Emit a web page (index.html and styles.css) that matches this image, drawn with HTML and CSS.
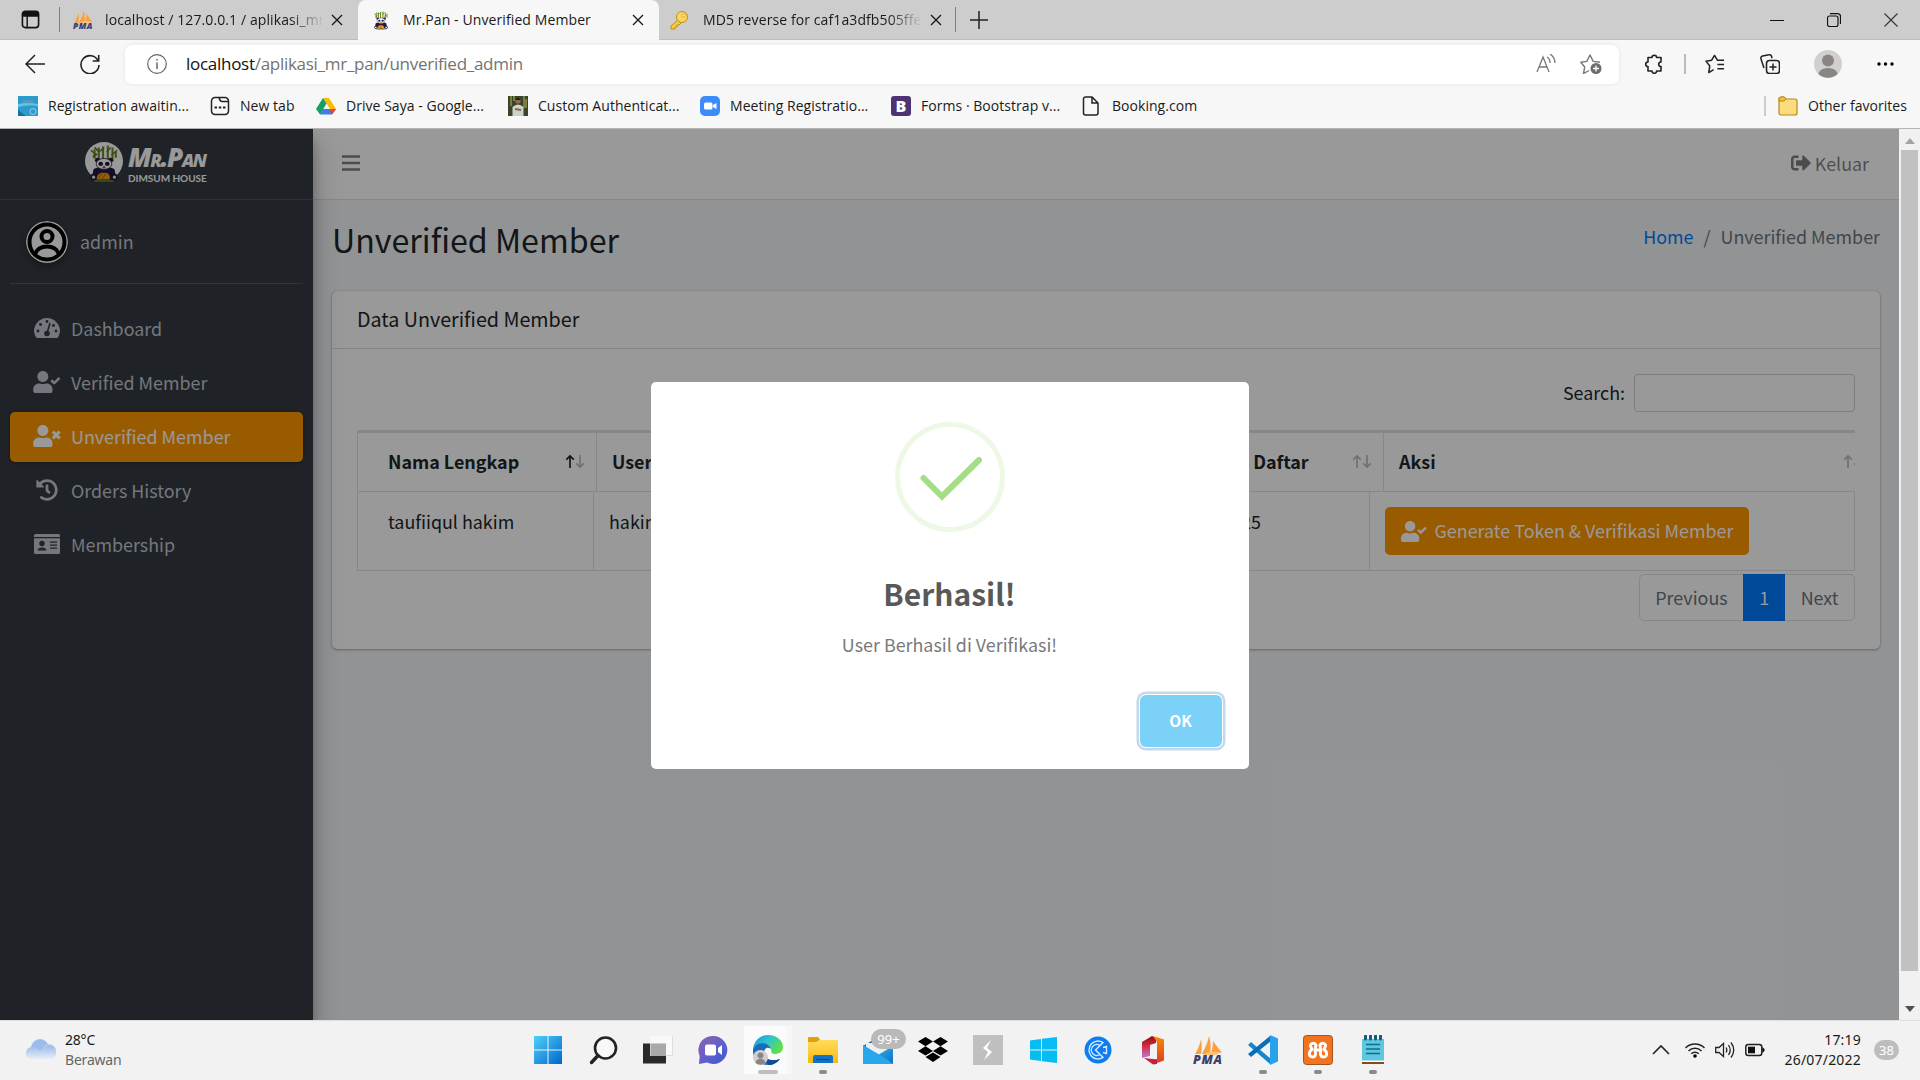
FILE: index.html
```html
<!DOCTYPE html>
<html lang="id">
<head>
<meta charset="utf-8">
<title>Mr.Pan - Unverified Member</title>
<link rel="stylesheet" href="styles.css">
</head>
<body>
<svg class="defs" aria-hidden="true">
  <defs>
    <symbol id="x" viewBox="0 0 12 12"><path d="M1 1l10 10M11 1L1 11" fill="none" stroke="currentColor" stroke-width="1.4"/></symbol>
    <symbol id="pma" viewBox="0 0 30 30">
      <path d="M2 19C4 16 7 10 8 4c1 5 1 10 0 15zM9 19C12 13 15 7 16 1c2 6 2 12 1 18zM18 18c1-3 2-7 2-12 3 4 7 9 9 12-4-1-7-1-11 0z" fill="#f9a13c"/>
      <path d="M10 20c5-4 12-4 17-2l-4 2z" fill="#fbc078"/>
      <text x="0" y="29" class="pma-text" textLength="29">PMA</text>
    </symbol>
    <symbol id="panda" viewBox="0 0 36 42">
      <path d="M8 17V7M12.500 20V5M17 20V4M22 20V3M27 20V5M30.500 16V10" stroke="#6c8e23" stroke-width="2.200"/>
      <path d="M4 8l5 4M8 5l5 5M14 9l4-4M21 10l4-5M26 13l6-5M6 15l5-3" stroke="#557a1c" stroke-width="1.600"/>
      <path d="M7 28q11-6 22 0l2 9q-13 6-26 0z" fill="#221a3d"/>
      <circle cx="11" cy="18.500" r="2.600" fill="#221a3d"/><circle cx="25" cy="18.500" r="2.600" fill="#221a3d"/>
      <ellipse cx="18" cy="22.500" rx="8.300" ry="5.800" fill="#fff" stroke="#221a3d" stroke-width=".8"/>
      <ellipse cx="14.500" cy="22.500" rx="2.500" ry="2.200" fill="#221a3d"/><ellipse cx="21.500" cy="22.500" rx="2.500" ry="2.200" fill="#221a3d"/>
      <circle cx="18" cy="26" r="1.400" fill="#b44"/>
      <path d="M10 39c0-5 4-8 8-7 5-1 7 3 6 7z" fill="#f39a1a"/>
      <path d="M12 37l4-4M16 38l4-5" stroke="#a35a10"/>
      <circle cx="7" cy="36.500" r="2.600" fill="#eee" stroke="#221a3d" stroke-width="1.800"/><circle cx="29" cy="36.500" r="2.600" fill="#eee" stroke="#221a3d" stroke-width="1.800"/>
      <path d="M8 40.500h20" stroke="#6c8e23" stroke-width="1.600"/>
    </symbol>
    <symbol id="user-check" viewBox="0 0 640 512"><path fill="currentColor" d="M224 256c70.700 0 128-57.300 128-128S294.700 0 224 0 96 57.300 96 128s57.300 128 128 128zm89.600 32h-16.700c-22.200 10.200-46.900 16-72.900 16s-50.600-5.800-72.900-16h-16.700C60.200 288 0 348.200 0 422.400V464c0 26.500 21.500 48 48 48h352c26.500 0 48-21.500 48-48v-41.600c0-74.200-60.200-134.400-134.400-134.400z"/><path d="M420 216l68 68L612 158" fill="none" stroke="currentColor" stroke-width="60" stroke-linejoin="round"/></symbol>
    <symbol id="user-times" viewBox="0 0 640 512"><path fill="currentColor" d="M224 256c70.700 0 128-57.300 128-128S294.700 0 224 0 96 57.300 96 128s57.300 128 128 128zm89.600 32h-16.700c-22.200 10.200-46.900 16-72.900 16s-50.600-5.800-72.900-16h-16.700C60.200 288 0 348.200 0 422.400V464c0 26.500 21.500 48 48 48h352c26.500 0 48-21.500 48-48v-41.600c0-74.200-60.200-134.400-134.400-134.400z"/><path d="M456 155l158 158M614 155L456 313" fill="none" stroke="currentColor" stroke-width="72"/></symbol>
    <symbol id="up" viewBox="0 0 10 16"><path d="M5 15V2M1 6l4-4 4 4" fill="none" stroke="currentColor" stroke-width="1.800"/></symbol>
    <symbol id="down" viewBox="0 0 10 16"><path d="M5 1v13M1 10l4 4 4-4" fill="none" stroke="currentColor" stroke-width="1.800"/></symbol>
    <linearGradient id="gw" x2="1" y2="1"><stop offset="0" stop-color="#4fd0fb"/><stop offset="1" stop-color="#0067cc"/></linearGradient>
    <linearGradient id="gchat" x2="1" y2="1"><stop offset="0" stop-color="#8f62ad"/><stop offset=".6" stop-color="#5b5fd0"/><stop offset="1" stop-color="#3a56c4"/></linearGradient>
    <linearGradient id="gedge" x2="1" y2=".5"><stop offset="0" stop-color="#1b8fdc"/><stop offset=".5" stop-color="#2bc3d2"/><stop offset="1" stop-color="#5ee04a"/></linearGradient>
    <linearGradient id="gfold" x2="0" y2="1"><stop offset="0" stop-color="#ffdc5e"/><stop offset="1" stop-color="#f9b90f"/></linearGradient>
    <linearGradient id="gmail" x2="1" y2="1"><stop offset="0" stop-color="#3cc6f4"/><stop offset="1" stop-color="#0f6fc6"/></linearGradient>
    <linearGradient id="gcloud" x2="0" y2="1"><stop offset="0" stop-color="#9cbcec"/><stop offset="1" stop-color="#e6eef6"/></linearGradient>
    <linearGradient id="goff" x2="0" y2="1"><stop offset="0" stop-color="#8e1010"/><stop offset=".5" stop-color="#d9304a"/><stop offset="1" stop-color="#b57be0"/></linearGradient>
    <linearGradient id="goff2" x2="0" y2="1"><stop offset="0" stop-color="#ff8a00"/><stop offset="1" stop-color="#d83b2a"/></linearGradient>
  </defs>
</svg>

<div class="tabstrip">
  <svg class="workspace" viewBox="0 0 20 20"><rect x="1.500" y="1.500" width="17" height="17" rx="3" fill="none" stroke="#111" stroke-width="1.700"/><path d="M1 7V4a3 3 0 0 1 3-3h12a3 3 0 0 1 3 3v3z" fill="#111"/><path d="M6.500 6v12" stroke="#111" stroke-width="1.500"/></svg>
  <span class="tab-sep"></span>
  <div class="tab">
    <svg class="favicon"><use href="#pma"/></svg>
    <span class="tab-title fade">localhost / 127.0.0.1 / aplikasi_mr_pan</span>
    <svg class="tab-close"><use href="#x"/></svg>
  </div>
  <div class="tab active">
    <svg class="favicon"><use href="#panda"/></svg>
    <span class="tab-title">Mr.Pan - Unverified Member</span>
    <svg class="tab-close"><use href="#x"/></svg>
  </div>
  <div class="tab third">
    <svg class="favicon" viewBox="0 0 20 20"><path d="M10 9l-8 7v3h4v-2h2v-2h2l3-3" fill="#f6c945" stroke="#c58d17"/><circle cx="13" cy="7" r="5.500" fill="#fbd75b" stroke="#c58d17"/><circle cx="14.500" cy="5.500" r="1.500" fill="#fff" stroke="#c58d17" stroke-width=".8"/></svg>
    <span class="tab-title fade">MD5 reverse for caf1a3dfb505ffed</span>
    <svg class="tab-close"><use href="#x"/></svg>
  </div>
  <span class="tab-sep"></span>
  <svg class="newtab" viewBox="0 0 18 18"><path d="M9 0v18M0 9h18" stroke="#222" stroke-width="1.500"/></svg>
  <div class="winctl">
    <svg viewBox="0 0 14 14"><path d="M0 7.500h14" stroke="#111"/></svg>
    <svg viewBox="0 0 14 14"><rect x=".5" y="3" width="10.500" height="10.500" rx="2" fill="none" stroke="#111" stroke-width="1.200"/><path d="M3 .6h7.500a3 3 0 0 1 3 3V11" fill="none" stroke="#111" stroke-width="1.200"/></svg>
    <svg viewBox="0 0 14 14"><path d="M.5.5l13 13M13.500.5l-13 13" stroke="#333" stroke-width="1.100"/></svg>
  </div>
</div>

<div class="toolbar">
  <svg class="ic back" viewBox="0 0 20 20"><path d="M20 10H1M10 1l-9 9 9 9" fill="none" stroke="#222" stroke-width="1.500"/></svg>
  <svg class="ic reload" viewBox="0 0 20 20"><path d="M18 6.500A9 9 0 1 0 19 11M18.700 1v6h-6" fill="none" stroke="#222" stroke-width="1.600"/></svg>
  <div class="address">
    <svg class="ic info" viewBox="0 0 20 20"><circle cx="10" cy="10" r="9.300" fill="none" stroke="#666" stroke-width="1.200"/><path d="M10 8.500V15M10 5v1.600" stroke="#666" stroke-width="1.500"/></svg>
    <span class="url"><b>localhost</b>/aplikasi_mr_pan/unverified_admin</span>
    <svg class="ic aloud" viewBox="0 0 20 20"><path d="M1 18L7 3l6 15M3 13h8M11 3c2 1 3 3 3 6M14 0c3 2 5 5 5 9" fill="none" stroke="#777" stroke-width="1.300"/></svg>
    <svg class="ic star" viewBox="0 0 22 20"><path d="M9 16.500l-5.500 3 1.200-6.500L.8 8.300l6-.9L10 1l3.200 6.400 6.800.9" fill="none" stroke="#777" stroke-width="1.400" stroke-linejoin="round"/><circle cx="16" cy="14.500" r="5.500" fill="#6d6d6d"/><path d="M16 11.500v6M13 14.500h6" stroke="#fff" stroke-width="1.300"/></svg>
  </div>
  <svg class="ic puzzle" viewBox="0 0 20 20"><path d="M4 3.500h4a2.300 2.300 0 0 1 4.600 0H17V8a2.300 2.300 0 0 0 0 4.600V17h-4.400a2.300 2.300 0 0 1-4.600 0H4v-4.400A2.300 2.300 0 0 1 4 8z" fill="none" stroke="#222" stroke-width="1.600" stroke-linejoin="round"/></svg>
  <span class="tool-sep"></span>
  <svg class="ic favs" viewBox="0 0 21 20"><path d="M9 16l-5 3 1-7-4-5 6-1 3-5 3 5h7M13 10.500h7M13 15h7" fill="none" stroke="#222" stroke-width="1.600" stroke-linejoin="round"/></svg>
  <svg class="ic coll" viewBox="0 0 20 20"><path d="M4 14L1 5a2.500 2.500 0 0 1 1.500-3L9 .8a2 2 0 0 1 2.500 1.500l.5 2" fill="none" stroke="#222" stroke-width="1.500"/><rect x="6.500" y="6.500" width="13" height="13" rx="3" fill="none" stroke="#222" stroke-width="1.600"/><path d="M13 9.500v7M9.500 13h7" stroke="#222" stroke-width="1.500"/></svg>
  <svg class="avatar" viewBox="0 0 28 28"><circle cx="14" cy="14" r="14" fill="#d2d0ce"/><circle cx="14" cy="10.500" r="6" fill="#8a8583"/><path d="M4.500 24c1-8 18-8 19 0a14 14 0 0 1-19 0z" fill="#8a8583"/></svg>
  <svg class="dots" viewBox="0 0 17 4"><circle cx="2" cy="2" r="1.700"/><circle cx="8.500" cy="2" r="1.700"/><circle cx="15" cy="2" r="1.700"/></svg>
</div>

<div class="bookmarks">
  <span class="bm"><svg viewBox="0 0 20 20"><rect width="20" height="20" fill="#2d9bcb"/><path d="M5 5.500h10" stroke="#a98a6a" stroke-width="1.500" fill="none"/><path d="M0 8q10-2 20 0v2q-10-2-20 1z" fill="#65c3e4"/><circle cx="15" cy="15.500" r="3" fill="none" stroke="#8fd2ea"/><path d="M0 14l8 6H0z" fill="#1670a0"/></svg>Registration awaitin...</span>
  <span class="bm"><svg viewBox="0 0 20 20"><path d="M1.500 5A3.500 3.500 0 0 1 5 1.500h10A3.500 3.500 0 0 1 18.500 5v10a3.500 3.500 0 0 1-3.500 3.500H5A3.500 3.500 0 0 1 1.500 15zM9 1.500q1 4 3 4h6.500" fill="none" stroke="#222" stroke-width="1.500"/><path d="M4.500 11.500h2.500M8.800 11.500h2.500M13 11.500h2.500" stroke="#222" stroke-width="2.200"/></svg>New tab</span>
  <span class="bm"><svg viewBox="0 0 20 20"><path d="M7 2h6l7 11h-6z" fill="#fbbc05"/><path d="M7 2l3.500 5.500L4 18.500 0 13z" fill="#15a15b"/><path d="M6.500 13H20l-4 5.500H4z" fill="#3f7ee8"/><path d="M16 18.500L13.500 13H20z" fill="#ea4335"/></svg>Drive Saya - Google...</span>
  <span class="bm"><svg viewBox="0 0 20 20"><rect width="20" height="20" fill="#38452a"/><path d="M3 0v10M16 0v12M6 0v5M18 3v9" stroke="#7d7c3c" stroke-width="2"/><circle cx="10" cy="5" r="2.600" fill="#9a6b4b"/><path d="M7.500 4q2.500-4 5 0z" fill="#1a1613"/><path d="M4.500 20V11q5.500-5 11 0v9z" fill="#cdd2cb"/><path d="M7 13l6 1" stroke="#8a6650" stroke-width="2"/></svg>Custom Authenticat...</span>
  <span class="bm"><svg viewBox="0 0 20 20"><rect width="20" height="20" rx="5" fill="#3b8bfb"/><rect x="4" y="6.500" width="8.500" height="7" rx="1.500" fill="#fff"/><path d="M13 9l3.500-2v6L13 11z" fill="#fff"/></svg>Meeting Registratio...</span>
  <span class="bm"><svg viewBox="0 0 20 20"><rect width="20" height="20" rx="3" fill="#4d3274"/><text x="4.500" y="16" class="bs">B</text></svg>Forms · Bootstrap v...</span>
  <span class="bm"><svg viewBox="0 0 20 20"><path d="M1.500 3a2 2 0 0 1 2-2H10l6 6v10a2 2 0 0 1-2 2H3.500a2 2 0 0 1-2-2zM10 1v6h6" fill="none" stroke="#222" stroke-width="1.500"/></svg>Booking.com</span>
  <span class="bm other"><svg viewBox="0 0 20 20"><path d="M1 3a2 2 0 0 1 2-2h3l2 2h9a2 2 0 0 1 2 2v12a2 2 0 0 1-2 2H3a2 2 0 0 1-2-2z" fill="#fddc7e" stroke="#b58a1d" stroke-width="1.200"/><path d="M1 5V3a2 2 0 0 1 2-2h3l2 2-2 2z" fill="#f5c433" stroke="#b58a1d"/></svg>Other favorites</span>
</div>

<div class="viewport">
  <div class="page">
    <aside class="sidebar">
      <div class="brand">
        <span class="logo"><svg><use href="#panda"/></svg></span>
        <span class="brand-text"><span class="name">Mr.Pan</span><span class="tag">DIMSUM HOUSE</span></span>
      </div>
      <div class="user">
        <svg viewBox="0 0 42 42"><circle cx="21" cy="21" r="21" fill="#fff"/><g fill="none" stroke="#000" stroke-width="4"><circle cx="21" cy="21" r="17.500"/><circle cx="21" cy="15.500" r="5.500"/><path d="M9 33q3-7.500 12-7.500T33 33"/></g></svg>
        <span>admin</span>
      </div>
      <nav>
        <a><svg class="w26" viewBox="0 0 26 20"><path fill="currentColor" d="M2.500 20A13 13 0 0 1 0 13C0 6 6 0 13 0s13 6 13 13a13 13 0 0 1-2.500 7z"/><g fill="#343a40"><circle cx="13" cy="3.500" r="1.400"/><circle cx="6.500" cy="6.500" r="1.400"/><circle cx="4" cy="13" r="1.400"/><circle cx="19.500" cy="7.500" r="1.400"/><circle cx="22" cy="13" r="1.400"/><circle cx="13" cy="15.500" r="2.800"/></g><path d="M13 15.500L16 5" stroke="#343a40" stroke-width="1.600"/></svg><span>Dashboard</span></a>
        <a><svg class="w28"><use href="#user-check"/></svg><span>Verified Member</span></a>
        <a class="current"><svg class="w28"><use href="#user-times"/></svg><span>Unverified Member</span></a>
        <a><svg class="w22" viewBox="0 0 512 512"><path fill="currentColor" d="M504 255.531c.253 136.640-111.180 248.372-247.820 248.468-59.015.042-113.223-20.530-155.822-54.911-11.077-8.940-11.905-25.541-1.839-35.607l11.267-11.267c8.609-8.609 22.353-9.551 31.891-1.984C173.062 425.135 212.781 440 256 440c101.705 0 184-82.311 184-184 0-101.705-82.311-184-184-184-48.814 0-93.149 18.969-126.068 49.932l50.754 50.754c10.080 10.080 2.941 27.314-11.313 27.314H24c-8.837 0-16-7.163-16-16V38.627c0-14.254 17.234-21.393 27.314-11.314l49.372 49.372C129.209 34.136 189.552 8 256 8c136.810 0 247.747 110.780 248 247.531zm-180.912 78.784l9.823-12.630c8.138-10.463 6.253-25.542-4.210-33.679L288 256.349V152c0-13.255-10.745-24-24-24h-16c-13.255 0-24 10.745-24 24v135.651l65.409 50.874c10.463 8.137 25.541 6.253 33.679-4.210z"/></svg><span>Orders History</span></a>
        <a><svg class="w26" viewBox="0 0 26 20"><path fill="currentColor" d="M0 3V1.500A1.500 1.500 0 0 1 1.500 0h23A1.500 1.500 0 0 1 26 1.500V3zM0 4.200h26v14.300a1.500 1.500 0 0 1-1.500 1.500h-23A1.500 1.500 0 0 1 0 18.500z"/><g fill="#343a40"><circle cx="8" cy="9.500" r="2.700"/><path d="M3.500 16.500c0-4 9-4 9 0z"/><path d="M16 7.500h7v1.200h-7zM16 10.500h7v1.200h-7zM16 13.500h7v1.200h-7z"/></g></svg><span>Membership</span></a>
      </nav>
    </aside>

    <main>
      <header class="navbar">
        <svg class="bars" viewBox="0 0 18 16"><path d="M0 1.500h18M0 8h18M0 14.500h18" stroke="currentColor" stroke-width="2.300"/></svg>
        <a class="logout"><svg viewBox="0 0 512 512"><path fill="currentColor" d="M497 273L329 441c-15 15-41 4.500-41-17v-96H152c-13.300 0-24-10.700-24-24v-96c0-13.300 10.700-24 24-24h136V88c0-21.400 25.900-32 41-17l168 168c9.300 9.400 9.300 24.600 0 34zM192 436v-40c0-6.600-5.400-12-12-12H96c-17.700 0-32-14.300-32-32V160c0-17.700 14.300-32 32-32h84c6.600 0 12-5.400 12-12V76c0-6.600-5.400-12-12-12H96c-53 0-96 43-96 96v192c0 53 43 96 96 96h84c6.600 0 12-5.400 12-12z"/></svg>Keluar</a>
      </header>
      <div class="content-header">
        <h1>Unverified Member</h1>
        <div class="crumbs"><a>Home</a><i>/</i><span>Unverified Member</span></div>
      </div>
      <section class="card">
        <div class="card-header">Data Unverified Member</div>
        <div class="card-body">
          <label class="search"><span>Search:</span><input type="text"></label>
          <div class="table">
            <div class="thead">
              <div class="first">Nama Lengkap<span class="sort asc"><svg><use href="#up"/></svg><svg><use href="#down"/></svg></span></div>
              <div>Username</div>
              <div>No. HP</div>
              <div>Tanggal Daftar<span class="sort"><svg><use href="#up"/></svg><svg><use href="#down"/></svg></span></div>
              <div class="aksi">Aksi<span class="sort"><svg><use href="#up"/></svg><svg><use href="#down"/></svg></span></div>
            </div>
            <div class="trow">
              <div class="first">taufiiqul hakim</div>
              <div>hakim</div>
              <div></div>
              <div>2022-07-25</div>
              <div class="action"><button class="verify"><svg><use href="#user-check"/></svg><span>Generate Token &amp; Verifikasi Member</span></button></div>
            </div>
          </div>
          <div class="pager"><span>Previous</span><span class="on">1</span><span>Next</span></div>
        </div>
      </section>
    </main>

    <div class="overlay">
      <div class="modal">
        <svg class="success" viewBox="0 0 110 110"><circle cx="55" cy="55" r="52.500" fill="none" stroke="#edf8e7" stroke-width="5"/><path d="M28.500 56l18.500 18.500L84 38" fill="none" stroke="#a5dc86" stroke-width="6" stroke-linecap="round"/></svg>
        <h2>Berhasil!</h2>
        <p>User Berhasil di Verifikasi!</p>
        <button class="ok">OK</button>
      </div>
    </div>
  </div>
  <div class="scrollbar">
    <svg viewBox="0 0 10 6"><path d="M0 6l5-6 5 6z" fill="#a3a3a3"/></svg>
    <div class="thumb"></div>
    <svg viewBox="0 0 10 6"><path d="M0 0l5 6 5-6z" fill="#505050"/></svg>
  </div>
</div>

<footer class="taskbar">
  <div class="weather">
    <svg viewBox="0 0 30 20"><circle cx="14" cy="9" r="9" fill="#9dbcec"/><circle cx="6" cy="14" r="6" fill="#c5d6ef"/><circle cx="23" cy="12" r="7" fill="#b4cae4"/><path d="M6 20a6 6 0 0 1 0-12q5 0 8 4 4-5 10-5a6 6 0 0 1 0 13z" fill="url(#gcloud)"/></svg>
    <div><span>28°C</span><span class="muted">Berawan</span></div>
  </div>
  <div class="apps">
    <span><svg viewBox="0 0 30 30"><path d="M1 1h13.500v13.500H1zM15.500 1H29v13.500H15.500zM1 15.500h13.500V29H1zM15.500 15.500H29V29H15.500z" fill="url(#gw)"/></svg></span>
    <span><svg viewBox="0 0 30 30"><circle cx="17.500" cy="13" r="10.500" fill="#f8f8f8" stroke="#222" stroke-width="2.600"/><path d="M10 20.500L3.500 27.500" stroke="#222" stroke-width="3.400" stroke-linecap="round"/></svg></span>
    <span><svg viewBox="0 0 30 30"><rect x="0" y="8.500" width="23" height="20" fill="#2b2a29"/><rect x="7" y="1" width="23" height="20" fill="#e9e9e9"/><path d="M7 1h23v20h-7V8.500H7z" fill="#f9f9f9"/><path d="M29.500 1v19.500H23" fill="none" stroke="#ddd"/><rect x="7.500" y="8.500" width="15.500" height="12.500" fill="#a9a9a9"/></svg></span>
    <span><svg viewBox="0 0 30 30"><path d="M15 1a14 14 0 1 1-6 26.500L1 29l.7-8A14 14 0 0 1 15 1z" fill="url(#gchat)"/><rect x="7" y="9.500" width="11" height="11" rx="2" fill="#fff"/><path d="M20 13l4-3v10l-4-3z" fill="#fff"/></svg></span>
    <span class="edge"><svg viewBox="0 0 30 30"><path d="M0 14C1 5 8 0 15 0c9 0 15 6 15 12 0 5-4 7-8 7-5 0-3-3-4-5-3-6-13-7-18 0z" fill="url(#gedge)"/><path d="M0 14C5 6 15 7 18 14c-4-3-7 0-7 4 0 6 7 9 16 6-4 5-9 6-12 6C6 30-1 23 0 14z" fill="#176dba"/><path d="M11 18c0 6 7 9 16 6-3 4-7 6-11 6-4-3-5-7-5-12z" fill="#114b91"/><circle cx="7.500" cy="22.500" r="7.500" fill="#d2d0ce"/><circle cx="7.500" cy="20.500" r="3" fill="#8a8583"/><path d="M2.500 27.500c1-5 9-5 10 0-2 3-8 3-10 0z" fill="#8a8583"/></svg><i class="run wide"></i></span>
    <span><svg viewBox="0 0 30 30"><path d="M0 3a1 1 0 0 1 1-1h9l3 4h-3l-2 3H0z" fill="#e0a00c"/><path d="M0 7h8.500l3-2H30v23H0z" fill="url(#gfold)"/><path d="M5 28v-6a2 2 0 0 1 2-2h16a2 2 0 0 1 2 2v6z" fill="#1273c9"/><path d="M8.500 24.500h13" stroke="#0a4d92" stroke-width="1.200"/></svg><i class="run"></i></span>
    <span><svg viewBox="0 0 30 30"><path d="M0 11L15 2l15 9v4H0z" fill="#0f62ae"/><path d="M3 8h24v8l-12 6-12-8z" fill="#eee"/><path d="M0 10l15 10 15-9v18H0z" fill="url(#gmail)"/><path d="M0 29V10l22 13 8 6z" fill="#28a8ea"/></svg><b class="count">99+</b></span>
    <span><svg viewBox="0 0 30 30"><path d="M7.500 2l7.500 4.500-7.500 4.700L0 6.500zM22.500 2L30 6.500l-7.500 4.700L15 6.500zM7.500 11.300l7.500 4.700-7.500 4.500L0 16zM22.500 11.300L30 16l-7.500 4.500L15 16zM7.500 22l7.500-4.600 7.500 4.600-7.500 5z"/></svg></span>
    <span><svg viewBox="0 0 30 30"><rect width="30" height="30" fill="#bfbfbf"/><path d="M18 5l-8 8 5 4-4 8 8-8-5-4z" fill="#fff"/></svg></span>
    <span><svg viewBox="0 0 30 30"><path d="M2 5.500L13 4v10.500H2zM14 3.800L29 2v12.500H14zM2 15.500h11V26L2 24.500zM14 15.500h15V28L14 26.300z" fill="#05bdf3"/></svg></span>
    <span><svg viewBox="0 0 30 30"><circle cx="15" cy="15" r="13.500" fill="#0f7df0"/><g fill="none" stroke="#d5ebff" stroke-width="1.400"><path d="M20 7.500a9 9 0 1 0 0 15L12.500 15z"/><path d="M20 12.500l3.500-1v7l-3.500-1M17 10.500a5.500 5.500 0 1 0 0 9"/></g></svg></span>
    <span><svg viewBox="0 0 30 30"><path d="M4 7L14 1l4 2v5l-6 2v11l-8 2z" fill="url(#goff)"/><path d="M15 1l11 3.500v21L16 29l-1-4 4-1V7z" fill="url(#goff2)"/><path d="M6 23l13 1.500V29l-4 .5z" fill="#c2233a"/></svg></span>
    <span><svg><use href="#pma"/></svg></span>
    <span><svg viewBox="0 0 30 30"><path d="M3 7l20 17-1 5L0 10z" fill="#1587cf"/><path d="M3 22L23 6l-1-5L0 19z" fill="#0b6fb3"/><path d="M22 0l8 3.500v23L22 30z" fill="#29a2ec"/></svg><i class="run"></i></span>
    <span><svg viewBox="0 0 30 30"><rect x=".5" y=".5" width="29" height="29" rx="3" fill="#f0731f" stroke="#a3541c"/><path d="M7.500 10a3 3 0 0 1 5.500 0c0 2.500-1 3-1 5h6c0-2-1-2.500-1-5a3 3 0 0 1 5.500 0c.5 2-2 3-1 5 3 2 3 7-1 7-3.500 0-3.500-4-2.500-7h-6c1 3 1 7-2.500 7-4 0-4-5-1-7 1-2-1.500-3-1-5z" fill="none" stroke="#fff" stroke-width="3" stroke-linejoin="round"/></svg><i class="run"></i></span>
    <span><svg viewBox="0 0 30 30"><path d="M4 4h22v22H4z" fill="#5ec6df"/><path d="M4 26h22v3H4z" fill="#8a4a0f"/><path d="M4 25.500h22v1.500H4z" fill="#fff"/><path d="M8 9.500h14M8 14h14M8 18.500h14" stroke="#0f6e8f" stroke-width="1.700"/><path d="M7.500 1v3M12.500 1v3M17.500 1v3M22.500 1v3" stroke="#0f5c7c" stroke-width="3" stroke-linecap="round"/></svg><i class="run"></i></span>
  </div>
  <div class="tray">
    <svg viewBox="0 0 20 20"><path d="M2 14l8-8 8 8" fill="none" stroke="#222" stroke-width="1.600"/></svg>
    <svg viewBox="0 0 20 20"><g fill="none" stroke="#222" stroke-width="1.500"><path d="M.5 8a13.500 13.500 0 0 1 19 0M3.500 11a9.200 9.200 0 0 1 13 0M6.300 13.800a5.200 5.200 0 0 1 7.400 0"/></g><circle cx="10" cy="16" r="1.800"/></svg>
    <svg viewBox="0 0 20 20"><path d="M.7 7.500v5H4l4.500 4V3.500L4 7.500zM11 7.500q1.700 2.500 0 5M13.500 5q3.500 5 0 10M16 2.500q5.500 7.500 0 15" fill="none" stroke="#222" stroke-width="1.300"/></svg>
    <svg viewBox="0 0 20 20"><rect x=".8" y="4.500" width="16" height="11" rx="2.500" fill="none" stroke="#222" stroke-width="1.500"/><rect x="3" y="6.700" width="7" height="6.600" fill="#111"/><path d="M18 8.500q2 1.500 0 3z" stroke="#111" stroke-width="1.400"/></svg>
    <div class="clock"><span>17:19</span><span>26/07/2022</span></div>
    <b class="notif">38</b>
  </div>
</footer>
</body>
</html>
```
FILE: styles.css
```css
* { box-sizing: border-box; }
body {
  margin: 0;
  width: 1920px;
  height: 1080px;
  overflow: hidden;
  display: flex;
  flex-direction: column;
  font-family: "Open Sans", "Noto Sans", sans-serif;
  font-size: 14px;
  color: #1a1a1a;
}
svg { display: block; flex: none; }
.defs { position: absolute; width: 0; height: 0; }
.pma-text { font: italic 800 12.500px "Open Sans", sans-serif; fill: #3f3d6b; }
.bs { font: 800 16px "Open Sans", sans-serif; fill: #fff; }

/* browser chrome */
.tabstrip { height: 40px; flex: none; background: #cdcdcd; border-bottom: 1px solid #bdbdbd; display: flex; align-items: center; }
.workspace { width: 19px; height: 19px; margin: 0 19px 0 21px; }
.tab-sep { width: 1px; height: 25px; background: #7d7d7d; }
.tab { width: 298px; height: 40px; display: flex; align-items: center; padding: 0 15px 0 13px; }
.tab.active { width: 301px; background: #f7f7f7; border-radius: 8px 8px 0 0; }
.tab.third { width: 296px; padding: 0 13px 0 10px; }
.favicon { width: 20px; height: 20px; margin-right: 12px; }
.tab.third .favicon { margin-right: 14px; }
.tab-title { flex: 1; letter-spacing: .1px; white-space: nowrap; overflow: hidden; }
.fade { -webkit-mask-image: linear-gradient(90deg, #000 185px, transparent 219px); mask-image: linear-gradient(90deg, #000 185px, transparent 219px); }
.tab-close { width: 12px; height: 12px; margin-left: 8px; }
.newtab { width: 18px; height: 18px; margin-left: 14px; }
.winctl { margin-left: auto; display: flex; gap: 43px; margin-right: 22px; }
.winctl svg { width: 14px; height: 14px; }

.toolbar { height: 48px; flex: none; background: #f7f7f7; display: flex; align-items: center; }
.ic { width: 20px; height: 20px; }
.back { margin: 0 35px 0 25px; }
.reload { margin-right: 25px; }
.address { width: 1494px; height: 39px; border-radius: 7px; background: #fff; box-shadow: 0 0 4px rgba(0,0,0,.08); display: flex; align-items: center; padding: 0 17px 0 22px; }
.url { margin-left: 19px; font-size: 17px; letter-spacing: -.28px; color: #737373; flex: 1; padding-bottom: 2px; }
.url b { color: #111; font-weight: 400; }
.aloud { margin-right: 24px; }
.star { width: 22px; }
.puzzle { margin-left: 25px; }
.tool-sep { width: 2px; height: 20px; background: #bbb; margin: 0 19px 0 20px; }
.coll { margin-left: 35px; }
.avatar { width: 28px; height: 28px; margin: 0 35px 0 34px; }
.dots { width: 17px; height: 4px; }

.bookmarks { height: 41px; flex: none; background: #f7f7f7; border-bottom: 1px solid #b5b5b5; padding: 0 13px 5px 18px; display: grid; grid-template-columns: 192px 106px 192px 192px 191px 191px 200px 1fr; align-items: center; }
.bm { display: flex; align-items: center; gap: 10px; letter-spacing: .04px; line-height: 20px; white-space: nowrap; }
.bm svg { width: 20px; height: 20px; }
.other { justify-self: end; border-left: 2px solid #ccc; padding-left: 12px; }

/* web page */
.viewport { height: 891px; flex: none; display: flex; }
.page {
  position: relative;
  flex: 1;
  overflow: hidden;
  display: flex;
  background: #f4f6f9;
  font-family: "Noto Sans CJK JP", sans-serif;
  font-size: 17.900px;
  color: #212529;
}
.sidebar { position: relative; z-index: 1; width: 313px; flex: none; background: #343a40; color: #c2c7d0; box-shadow: 0 14px 28px rgba(0,0,0,.25), 0 10px 10px rgba(0,0,0,.22); }
.brand { height: 71px; border-bottom: 1px solid #4b545c; display: flex; padding: 13px 0 0 85px; gap: 5px; }
.logo { width: 38px; height: 38px; border-radius: 50%; background: #fff; }
.logo svg { width: 34px; height: 41px; margin-left: 2px; }
.brand-text { display: flex; flex-direction: column; color: #fff; }
.name { font: italic 800 26px/30px "Open Sans", sans-serif; font-variant: small-caps; letter-spacing: -1.400px; }
.tag { font: 700 10px/10px Lato, sans-serif; letter-spacing: -.050px; margin-top: 1px; }
.user { height: 84px; margin: 0 10px; border-bottom: 1px solid #4f5962; display: flex; align-items: center; gap: 12px; padding-left: 16px; }
.user span { padding-bottom: 2px; }
.user svg { width: 42px; height: 42px; border-radius: 50%; box-shadow: 0 3px 6px rgba(0,0,0,.3); }
nav { padding: 20px 10px; display: grid; gap: 4px; }
nav a { height: 50px; display: grid; grid-template-columns: 33px 1fr; justify-items: center; align-items: center; padding: 0 0 2px 20px; border-radius: 5px; column-gap: 8px; }
nav a span { justify-self: start; }
nav .current { background: #ff9800; color: #fff; box-shadow: 0 1px 3px rgba(0,0,0,.3); }
.w26 { width: 26px; height: 20px; }
.w28 { width: 28px; height: 22px; }
.w22 { width: 22px; height: 22px; }

main { flex: 1; }
.navbar { height: 71px; background: #fff; border-bottom: 1px solid #dee2e6; color: rgba(0,0,0,.5); display: flex; align-items: center; justify-content: space-between; padding: 0 30px 2px 29px; }
.bars { width: 18px; height: 16px; }
.logout { display: flex; align-items: center; gap: 4px; }
.logout svg { width: 20px; height: 20px; }
.content-header { height: 91px; padding: 19px 19px 0 19px; display: flex; justify-content: space-between; }
h1 { font-size: 32.200px; line-height: 40px; font-weight: 400; margin: 0; }
.crumbs { display: flex; gap: 10px; line-height: 35px; color: #6c757d; }
.crumbs a { color: #007bff; }
.crumbs i { font-style: normal; }
.card { margin: 0 19px; height: 358px; background: #fff; border-radius: 5px; box-shadow: 0 0 1px rgba(0,0,0,.25), 0 1px 3px rgba(0,0,0,.3); }
.card-header { height: 58px; border-bottom: 1px solid #dfdfdf; padding: 0 25px; font-size: 19.700px; line-height: 55px; }
.card-body { padding: 25px; display: flex; flex-direction: column; }
.search { display: flex; align-self: flex-end; align-items: center; gap: 9px; height: 38px; }
.search span { padding-bottom: 3px; }
.search input { width: 221px; height: 38px; border: 1px solid #ced4da; border-radius: 4px; background: #fff; }
.table { margin-top: 18px; border-left: 1px solid #dee2e6; }
.thead { display: grid; grid-template-columns: 239px 203px 365px 219px 1fr; height: 62px; border-top: 3px solid #dee2e6; border-bottom: 1px solid #dee2e6; font-weight: 700; overflow: hidden; }
.thead > div { display: flex; align-items: center; justify-content: space-between; padding: 0 11px 2px 15px; border-right: 1px solid #dee2e6; white-space: nowrap; }
.thead .first, .trow .first { padding-left: 30px; }
.thead .aksi { border: 0; padding-right: 0; margin-right: -8px; }
.sort { display: flex; color: #bcbdbe; }
.sort svg { width: 10px; height: 15px; }
.asc svg:first-child { color: #212529; }
.trow { display: grid; grid-template-columns: 236px 203px 357px 216px 1fr; height: 79px; border-bottom: 1px solid #dee2e6; }
.trow > div { border-right: 1px solid #dee2e6; padding: 13px 15px; line-height: 32px; }
.trow .action { padding-top: 15px; }
.verify { width: 364px; height: 48px; background: #ff9800; color: #fff; border: 0; border-radius: 5px; display: flex; align-items: center; justify-content: center; gap: 8px; font: inherit; white-space: nowrap; padding: 0; }
.verify svg { width: 26px; height: 21px; }
.verify span { padding-bottom: 2px; }
.pager { align-self: flex-end; display: flex; height: 47px; margin-top: 3px; border: 1px solid #dee2e6; border-radius: 5px; color: #6c757d; line-height: 45px; }
.pager span { padding: 0 15.500px; }
.pager .on { background: #007bff; color: #fff; margin: -1px 0; line-height: 47px; padding: 0 16px; }

.overlay { position: absolute; inset: 0; z-index: 5; background: rgba(0,0,0,.4); display: flex; align-items: center; justify-content: center; }
.modal { width: 598px; height: 387px; margin-top: 2px; background: #fff; border-radius: 5px; display: flex; flex-direction: column; align-items: center; padding: 40px 27px 22px; }
.success { width: 110px; height: 110px; }
h2 { margin: 39px 0 0; font-size: 30px; line-height: 44px; font-weight: 700; color: #595959; }
p { margin: 16px 0 0; line-height: 26px; color: #797979; }
.ok { margin-top: auto; align-self: flex-end; width: 82px; height: 52px; border: 0; border-radius: 6px; background: #7cd1f9; box-shadow: 0 0 0 1px #fff, 0 0 0 3.500px #c3d8e8; color: #fff; font: 700 15.500px "Noto Sans CJK JP", sans-serif; padding-bottom: 3px; }

.scrollbar { width: 21px; background: #f1f1f1; display: flex; flex-direction: column; align-items: center; padding: 9px 0 8px; }
.scrollbar svg { width: 10px; height: 6px; }
.thumb { width: 17px; height: 821px; margin: 6px 0 auto; background: #c1c1c1; }

/* taskbar */
.taskbar { height: 60px; flex: none; background: #f2f2f2; border-top: 1px solid #e0e0e0; display: grid; grid-template-columns: 520px 1fr auto; align-items: center; padding-bottom: 1px; font-family: "Noto Sans", sans-serif; font-size: 14px; }
.weather { display: flex; align-items: center; gap: 9px; padding-left: 26px; letter-spacing: -.2px; }
.weather svg { width: 30px; height: 20px; margin-bottom: 3px; }
.weather div, .clock { display: flex; flex-direction: column; line-height: 20px; }
.muted { color: #666; }
.apps { display: flex; }
.apps > span { position: relative; width: 55px; height: 48px; display: grid; place-items: center; }
.apps > span > svg { width: 30px; height: 30px; }
.edge { background: linear-gradient(#fbfbfb, #fbfbfb) 4px 0 / 43px 48px no-repeat, linear-gradient(#f7f7f7, #f7f7f7) 47px 0 / 5px 48px no-repeat; }
.run { position: absolute; bottom: 0; left: 24px; width: 8px; height: 4px; border-radius: 2px; background: #8a8a8a; }
.wide { left: 18px; width: 20px; background: #bdbdbd; }
.count { position: absolute; left: 21px; top: 3px; width: 35px; height: 20px; border-radius: 10px; background: #b9b9b9; color: #fff; font-weight: 400; font-size: 13px; line-height: 20px; text-align: center; }
.tray { display: flex; align-items: center; gap: 10px; padding-right: 21px; }
.tray svg { width: 20px; height: 20px; }
.tray svg:first-child { margin-right: 4px; }
.clock { text-align: right; width: 86px; letter-spacing: .2px; }
.notif { width: 25px; height: 20px; margin-left: 3px; border-radius: 10px; background: #bdbdbd; color: #fff; font-weight: 400; font-size: 13px; line-height: 20px; text-align: center; }
```
